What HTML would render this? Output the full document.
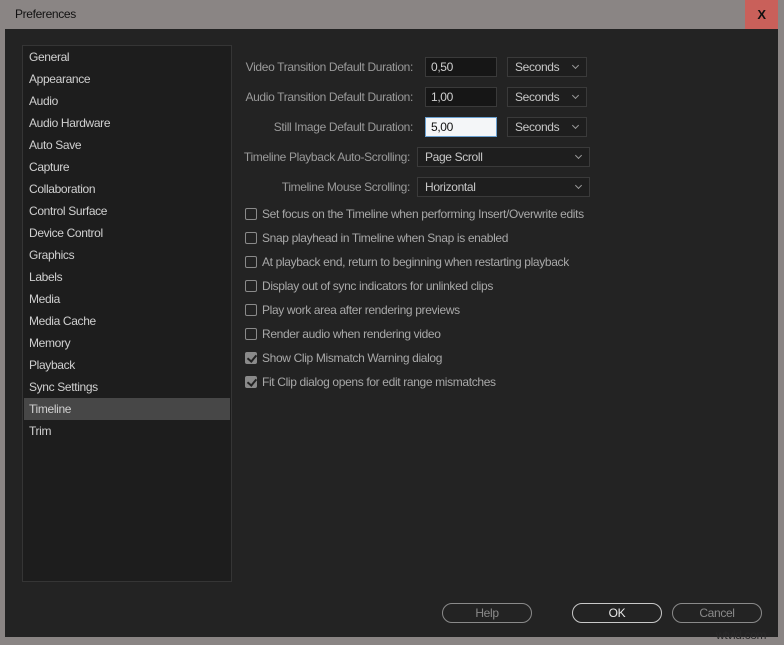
<!DOCTYPE html>
<html><head><style>
*{margin:0;padding:0;box-sizing:border-box}
body{width:784px;height:645px;background:#8a8584;font-family:"Liberation Sans",sans-serif;font-size:12px;letter-spacing:-0.35px;position:relative;overflow:hidden;color:#c8c8c8}
.a{position:absolute}
#title{left:15px;top:7px;color:#111;font-size:12px}
#close{left:745px;top:0;width:33px;height:29px;background:#c9605a;color:#111;font-weight:bold;font-size:13px;text-align:center;line-height:29px}
#dlg{left:5px;top:29px;width:773px;height:608px;background:#232323}
#list{left:22px;top:45px;width:210px;height:537px;background:#1d1d1d;border:1px solid #353535}
.it{position:absolute;left:1px;width:206px;height:22px;line-height:22px;padding-left:5px;color:#d0d0d0}
.sel{background:#474747}
.lbl{position:absolute;text-align:right;width:200px;color:#9a9a9a;line-height:20px}
.inp{position:absolute;height:20px;background:#161616;border:1px solid #3a3a3a;line-height:18px;padding-left:5px;color:#d0d0d0}
.dd{position:absolute;height:20px;background:#1e1e1e;border:1px solid #3a3a3a;line-height:18px;padding-left:7px;color:#c8c8c8}
.dd:after{content:"";position:absolute;right:8px;top:5px;width:4px;height:4px;border-right:1px solid #999;border-bottom:1px solid #999;transform:rotate(45deg)}
.cb{position:absolute;left:245px;width:12px;height:12px;border:1px solid #8a8a8a;border-radius:2px}
.cb.on{background:#8a8a8a}
.cb.on:after{content:"";position:absolute;left:3px;top:0px;width:4px;height:7px;border-right:2px solid #222;border-bottom:2px solid #222;transform:rotate(40deg)}
.ct{position:absolute;left:262px;color:#a8a8a8;line-height:14px}
.btn{position:absolute;top:603px;width:90px;height:20px;border:1px solid #8a8a8a;border-radius:10px;text-align:center;line-height:18px;color:#8a8a8a}
</style></head><body>
<div class="a" id="title">Preferences</div>
<div class="a" id="close">X</div>
<div class="a" id="dlg"></div>
<div class="a" id="list">
<div class="it" style="top:0">General</div>
<div class="it" style="top:22px">Appearance</div>
<div class="it" style="top:44px">Audio</div>
<div class="it" style="top:66px">Audio Hardware</div>
<div class="it" style="top:88px">Auto Save</div>
<div class="it" style="top:110px">Capture</div>
<div class="it" style="top:132px">Collaboration</div>
<div class="it" style="top:154px">Control Surface</div>
<div class="it" style="top:176px">Device Control</div>
<div class="it" style="top:198px">Graphics</div>
<div class="it" style="top:220px">Labels</div>
<div class="it" style="top:242px">Media</div>
<div class="it" style="top:264px">Media Cache</div>
<div class="it" style="top:286px">Memory</div>
<div class="it" style="top:308px">Playback</div>
<div class="it" style="top:330px">Sync Settings</div>
<div class="it sel" style="top:352px">Timeline</div>
<div class="it" style="top:374px">Trim</div>
</div>
<div class="lbl" style="left:213px;top:57px">Video Transition Default Duration:</div>
<div class="inp" style="left:425px;top:57px;width:72px">0,50</div>
<div class="dd" style="left:507px;top:57px;width:80px">Seconds</div>
<div class="lbl" style="left:213px;top:87px">Audio Transition Default Duration:</div>
<div class="inp" style="left:425px;top:87px;width:72px">1,00</div>
<div class="dd" style="left:507px;top:87px;width:80px">Seconds</div>
<div class="lbl" style="left:213px;top:117px">Still Image Default Duration:</div>
<div class="inp" style="left:425px;top:117px;width:72px;background:#f4f6f8;border-color:#6aa0d0;color:#111">5,00</div>
<div class="dd" style="left:507px;top:117px;width:80px">Seconds</div>
<div class="lbl" style="left:210px;top:147px">Timeline Playback Auto-Scrolling:</div>
<div class="dd" style="left:417px;top:147px;width:173px">Page Scroll</div>
<div class="lbl" style="left:210px;top:177px">Timeline Mouse Scrolling:</div>
<div class="dd" style="left:417px;top:177px;width:173px">Horizontal</div>
<div class="cb" style="top:208px"></div><div class="ct" style="top:207px">Set focus on the Timeline when performing Insert/Overwrite edits</div>
<div class="cb" style="top:232px"></div><div class="ct" style="top:231px">Snap playhead in Timeline when Snap is enabled</div>
<div class="cb" style="top:256px"></div><div class="ct" style="top:255px">At playback end, return to beginning when restarting playback</div>
<div class="cb" style="top:280px"></div><div class="ct" style="top:279px">Display out of sync indicators for unlinked clips</div>
<div class="cb" style="top:304px"></div><div class="ct" style="top:303px">Play work area after rendering previews</div>
<div class="cb" style="top:328px"></div><div class="ct" style="top:327px">Render audio when rendering video</div>
<div class="cb on" style="top:352px"></div><div class="ct" style="top:351px">Show Clip Mismatch Warning dialog</div>
<div class="cb on" style="top:376px"></div><div class="ct" style="top:375px">Fit Clip dialog opens for edit range mismatches</div>
<div class="btn" style="left:442px">Help</div>
<div class="btn" style="left:572px;color:#e8e8e8;border-color:#c8c8c8">OK</div>
<div class="btn" style="left:672px">Cancel</div>
<div class="a" style="left:716px;top:628px;color:#2a2a2a;font-size:12px">wtvid.com</div>
</body></html>
